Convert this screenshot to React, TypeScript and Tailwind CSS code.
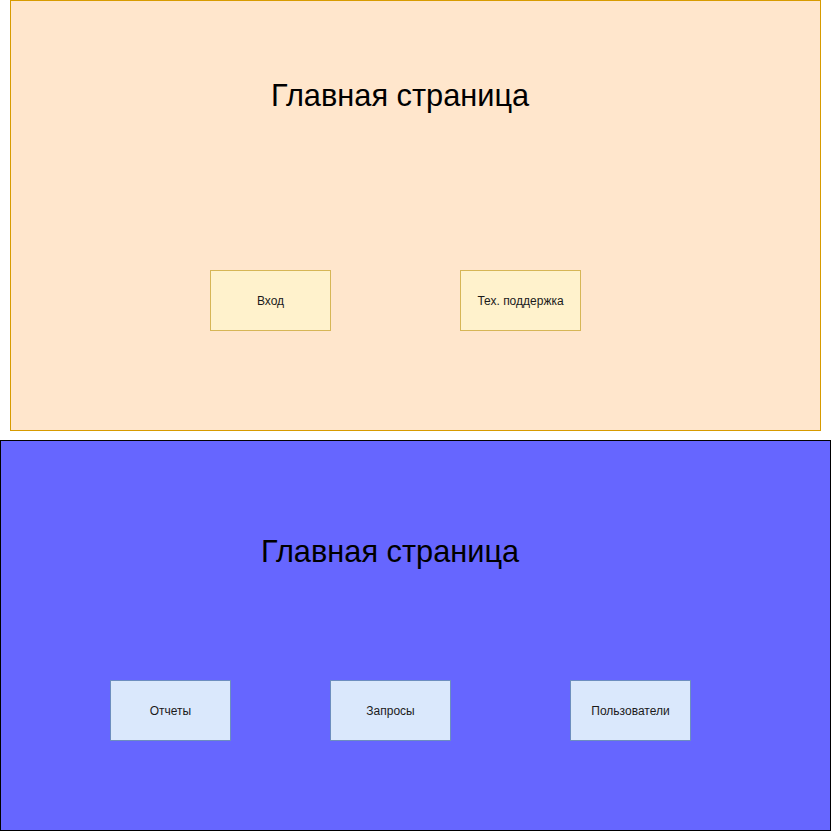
const font = { fontFamily: '"Liberation Sans", Arial, sans-serif' };

function Box({ label, tone }: { label: string; tone: 'yellow' | 'blue' }) {
  const cls =
    tone === 'yellow'
      ? 'bg-[#fff2cc] border-[#d6b656]'
      : 'bg-[#dae8fc] border-[#6c8ebf]';
  return (
    <div
      className={`w-[121px] h-[61px] border flex items-center justify-center text-[12px] text-[#1a1a1a] ${cls}`}
    >
      {label}
    </div>
  );
}

export default function App() {
  return (
    <div className="w-[831px] h-[831px] bg-white" style={font}>
      {/* Guest page */}
      <div className="ml-[10px] w-[811px] h-[431px] border border-[#d79b00] bg-[#ffe6cc]">
        <div className="h-[114px] pl-[260px] pt-[77px] text-[30.75px] leading-[36px] text-black">
          Главная страница
        </div>
        <div className="flex pl-[199px] pt-[155px] gap-[129px]">
          <Box label="Вход" tone="yellow" />
          <Box label="Тех. поддержка" tone="yellow" />
        </div>
      </div>

      {/* Admin page */}
      <div className="mt-[9px] w-[831px] h-[391px] border border-black bg-[#6666ff]">
        <div className="h-[130px] pl-[260px] pt-[93px] text-[30.75px] leading-[36px] text-black">
          Главная страница
        </div>
        <div className="flex pl-[109px] pt-[109px] gap-[99px]">
          <Box label="Отчеты" tone="blue" />
          <Box label="Запросы" tone="blue" />
          <div className="ml-[20px]">
            <Box label="Пользователи" tone="blue" />
          </div>
        </div>
      </div>
    </div>
  );
}
